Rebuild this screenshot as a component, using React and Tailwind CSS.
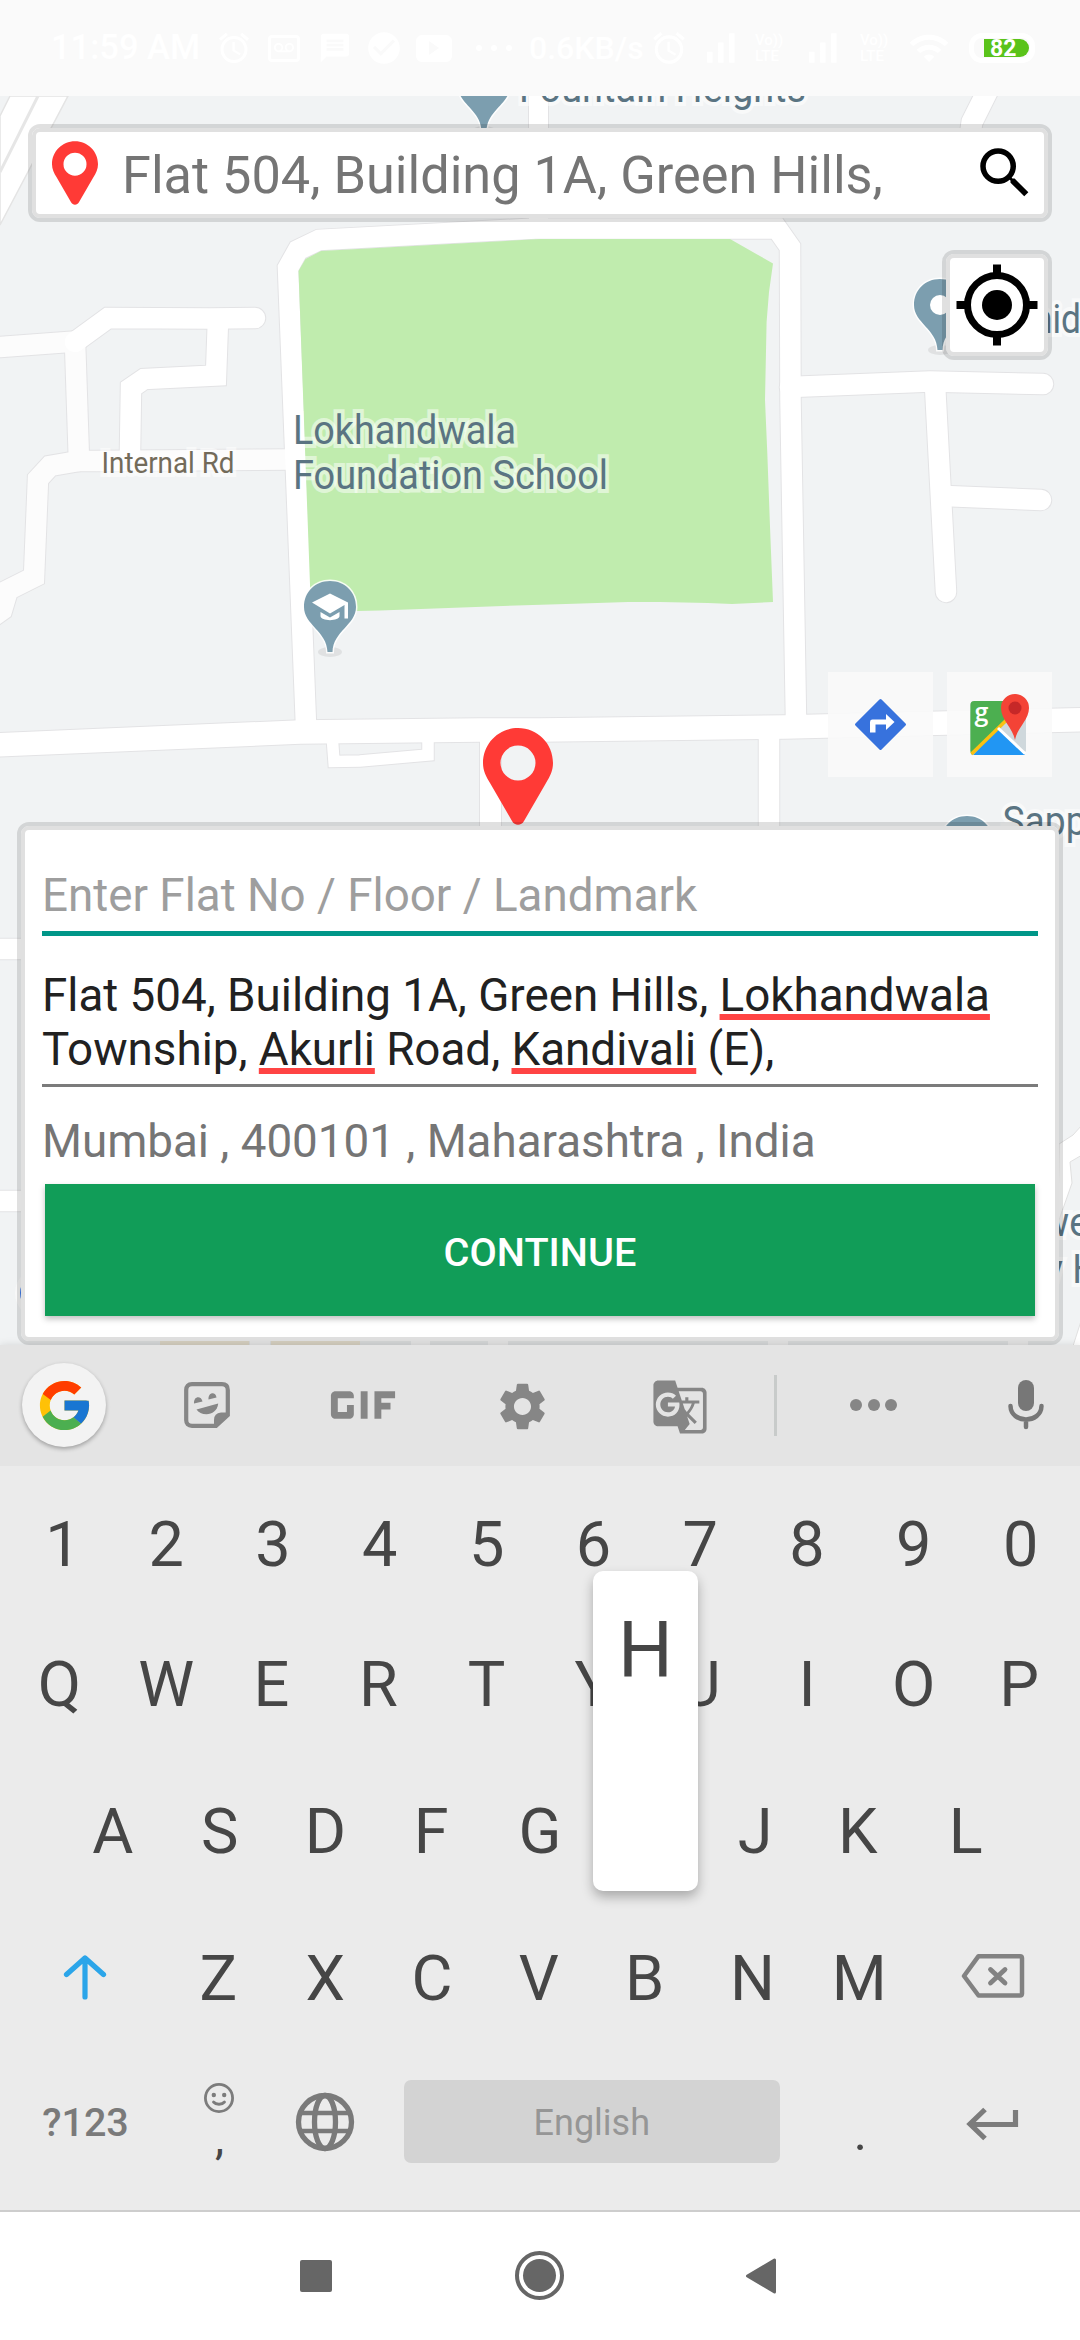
import React from "react";
import { FcGoogle } from "react-icons/fc";
import { MdAccessAlarm, MdCheckCircle, MdGif, MdGTranslate, MdMessage, MdSearch, MdSettings, MdSignalCellularAlt, MdVoicemail, MdWifi } from "react-icons/md";

const ROADS = [
  // [points, width, color]
  ["0,347 75,341.5", 20.5, "#fcfcfc"],
  ["75,342 79,461", 20.5, "#fcfcfc"],
  ["292,459.5 95,461 79,461 50,466 38,479 34,577 8,590 2,610 -12,620", 20.5, "#fcfcfc"],
  ["218,320 216,375.5 144,379 131,388 130,451", 20.5, "#ffffff"],
  ["75,342 108,318 210,318.5 255,318", 20.5, "#ffffff"],
  ["332,735 334,761.5 360,761 428,755 428,735", 11.5, "#ffffff"],
  ["490.5,730 490.5,840", 21, "#ffffff"],
  ["769,730 769,840", 20.5, "#ffffff"],
  ["538.5,80 538.5,228", 19, "#ffffff"],
  ["988,90 972,122 968,150", 21, "#ffffff"],
  ["790,387 930,381.5 1043,384", 20.5, "#ffffff"],
  ["935,385 946,592", 20.5, "#ffffff"],
  ["945,496 1041,500", 20.5, "#ffffff"],
  ["306,725 288,268 298,250 319,240 535,228.5 777,228.5 790,247 790.5,400 796,720", 20.5, "#ffffff"],
  ["-5,745 300,732 480,730 540,730 785,727 1085,719.6", 23.5, "#ffffff"],
  ["-10,949 60,949", 20.5, "#ffffff"],
  ["-10,1201 60,1201", 20.5, "#ffffff"],
];

function PlacePin({ x, y, children }) {
  return (
    <g transform={`translate(${x} ${y})`}>
      <ellipse cx="0" cy="45" rx="12" ry="5" fill="#000" opacity="0.07" />
      <path
        d="M0 -26 C15 -26 26 -15 26 0 C26 18 3 24 2.5 45 H-2.5 C-3 24 -26 18 -26 0 C-26 -15 -15 -26 0 -26Z"
        fill="#7c9eaf"
        stroke="#ffffff"
        strokeOpacity="0.85"
        strokeWidth="3"
        paintOrder="stroke"
      />
      {children || <circle r="10" fill="#fff" />}
    </g>
  );
}

function MapLabel({ x, y, w, size = 40, color = "#5a7482", children }) {
  return (
    <text
      x={x}
      y={y}
      textLength={w}
      lengthAdjust="spacingAndGlyphs"
      fontSize={size}
      fill={color}
      stroke="#ffffff"
      strokeOpacity="0.5"
      strokeWidth="8"
      paintOrder="stroke"
    >
      {children}
    </text>
  );
}

function MapCanvas() {
  return (
    <svg className="absolute inset-0" width="1080" height="1249" viewBox="0 96 1080 1249" fill="none">
      <rect y="96" width="1080" height="1249" fill="#f1f3f4" />
      <path d="M10 96H68L0 225V116Z" fill="#fff" stroke="#e4e4e4" strokeWidth="1.5" />
      <path d="M38 96L0 172" stroke="#e6e6e6" strokeWidth="3" />
      {ROADS.map(([points, width]) => (
        <polyline key={points} points={points} stroke="#e3e3e5" strokeWidth={width + 2} strokeLinecap="round" strokeLinejoin="miter" />
      ))}
      {ROADS.map(([points, width, color]) => (
        <polyline key={points} points={points} stroke={color} strokeWidth={width} strokeLinecap="round" strokeLinejoin="miter" />
      ))}
      <path
        d="M298.5 271L305.5 259L321 251L540 239H730L773 263.5L769 292L766.6 322L765 400L767.3 453L770 526.5L773 602L732 604L708 603L660 602H628L566 604L503 606L380 610.6L311 612Z"
        fill="#c0ecae"
      />
      <path d="M1059 1144L1073 1135L1082 1125V1155L1070 1162L1072 1183L1058 1223Z" fill="#fff" stroke="#e0e0e0" strokeWidth="1" />
      <path d="M1073 1346L1082 1318V1346Z" fill="#fff" stroke="#e0e0e0" strokeWidth="1" />
      <path d="M160 1338H249V1346H160ZM271 1338H360V1346H271Z" fill="#f1ead9" />
      <path d="M250 1338H270V1346H250ZM411 1338H430V1346H411ZM488 1338H508V1346H488ZM768 1338H788V1346H768ZM1008 1338H1028V1346H1008Z" fill="#fff" />
      <circle cx="40" cy="1293" r="25" fill="#f8f8f8" />
      <circle cx="40" cy="1293" r="20" fill="#3b78e7" />

      <PlacePin x={484} y={86} />
      <PlacePin x={940} y={305} />
      <PlacePin x={967} y={842} />
      <PlacePin x={330} y={607}>
        <path d="M0 -13.5L18 -4.5V11.5H14.5V-2L0 6.5L-18 -4.5Z" fill="#fff" />
        <path d="M-9.5 5L0 10.5L9.5 5V9C9.5 14.5 -9.5 14.5 -9.5 9Z" fill="#fff" />
      </PlacePin>
      <MapLabel x={519} y={102} w={287}>Fountain Heights</MapLabel>
      <MapLabel x={293} y={443.7} w={223}>Lokhandwala</MapLabel>
      <MapLabel x={293} y={488.5} w={315}>Foundation School</MapLabel>
      <MapLabel x={101.5} y={472.6} w={133} size={30} color="#736b5a">Internal Rd</MapLabel>
      <MapLabel x={1033} y={332.6} w={48}>nid</MapLabel>
      <MapLabel x={1002.5} y={835} w={84}>Sapp</MapLabel>
      <MapLabel x={1041} y={1236} w={48}>we</MapLabel>
      <MapLabel x={1045} y={1282.5} w={54}>y H</MapLabel>
    </svg>
  );
}

function RedPin({ width, height }) {
  return (
    <svg width={width} height={height} viewBox="0 0 70 97">
      <path
        d="M35 0C54.5 0 70 15.5 70 35C70 42.500 67 48.500 63 55L41 93C38.500 98 31.500 98 29 93L7 55C3 48.500 0 42.500 0 35C0 15.500 15.500 0 35 0ZM35 17.500A17.500 17.500 0 1 0 35 52.500A17.500 17.500 0 1 0 35 17.500Z"
        fill="#ff3a36"
        fillRule="evenodd"
      />
    </svg>
  );
}

function VoLte() {
  return (
    <div className="flex w-8 flex-col text-[15px] leading-[16px] font-medium">
      <span>Vo))</span>
      <span>LTE</span>
    </div>
  );
}

function StatusBar() {
  return (
    <div className="flex h-24 shrink-0 items-center bg-[#fafafa] pl-[51px] text-white">
      <span className="w-[150px] text-[34.500px] font-medium whitespace-nowrap">11:59 AM</span>
      <MdAccessAlarm size={36} className="ml-[15px]" />
      <div className="ml-4 flex h-[27px] w-8 items-center justify-center rounded-[4px] border-[3px] border-white">
        <MdVoicemail size={20} />
      </div>
      <MdMessage size={34} className="ml-[18px]" />
      <MdCheckCircle size={38} className="ml-[13px]" />
      <div className="ml-[13px] flex h-[27px] w-9 items-center justify-center rounded-[6px] bg-white">
        <svg width="12" height="14" viewBox="0 0 12 14"><path d="M1 0L11 7L1 14Z" fill="#fafafa" /></svg>
      </div>
      <div className="ml-6 flex w-9 justify-between">
        <span className="size-1.5 rounded-full bg-white" />
        <span className="size-1.5 rounded-full bg-white" />
        <span className="size-1.5 rounded-full bg-white" />
      </div>
      <span className="ml-[17px] w-[114px] text-[32px] font-medium whitespace-nowrap">0.6KB/s</span>
      <MdAccessAlarm size={38} className="ml-[7px]" />
      <MdSignalCellularAlt size={44} className="ml-2.5" />
      <div className="ml-[13px]"><VoLte /></div>
      <MdSignalCellularAlt size={44} className="ml-[13px]" />
      <div className="ml-4"><VoLte /></div>
      <MdWifi size={42} className="ml-4" />
      <div className="ml-[19px] flex h-[30px] w-[66px] items-center rounded-[13px] border-[5px] border-white pl-2.5">
        <div className="flex h-[18px] w-[45px] items-center rounded-r-[9px] bg-[#5ac31a] pl-1.5 text-[23px] leading-none font-bold">
          82
        </div>
      </div>
    </div>
  );
}

function Framed({ className, children }) {
  return (
    <div className={`rounded-[12px] border-4 border-black/12 ${className}`}>
      <div className="h-full w-full rounded-[8px] border-4 border-[#e0e0e0] bg-white">{children}</div>
    </div>
  );
}

function AddressPanel() {
  return (
    <Framed className="relative mx-[17px] mt-[45px] h-[523px]">
      <div className="flex flex-col px-[17px] pt-[39px] text-[45.750px] leading-[54px] whitespace-nowrap">
        <p className="text-[#9e9e9e]">Enter Flat No / Floor / Landmark</p>
        <div className="mt-2 h-[5px] bg-[#009688]" />
        <p className="mt-[33px] text-[#212121]">
          Flat 504, Building 1A, Green Hills, <Misspelt>Lokhandwala</Misspelt>
          <br />
          Township, <Misspelt>Akurli</Misspelt> Road, <Misspelt>Kandivali</Misspelt> (E),
        </p>
        <div className="mt-[7px] h-[3px] bg-[#7b7b7b]" />
        <p className="mt-7 text-[#757575]">Mumbai , 400101 , Maharashtra , India</p>
        <button className="mx-[3px] mt-[15px] h-[132px] bg-[#119d58] pt-[5px] text-[39.700px] font-medium text-white shadow-[0_3px_6px_rgba(0,0,0,0.25)]">
          CONTINUE
        </button>
      </div>
    </Framed>
  );
}

function Misspelt({ children }) {
  return (
    <span className="underline decoration-[#ff4444] decoration-[6px] underline-offset-[3px] [text-decoration-skip-ink:none]">
      {children}
    </span>
  );
}

function MapSection() {
  return (
    <div className="relative flex h-[1249px] shrink-0 flex-col overflow-hidden">
      <MapCanvas />
      <Framed className="relative mx-7 mt-7 h-[98px]">
        <div className="flex h-full items-center pr-1.5 pl-4">
          <RedPin width={46} height={64} />
          <span className="ml-6 flex-1 pt-[7px] text-[52.250px] leading-none whitespace-nowrap text-[#757575]">
            Flat 504, Building 1A, Green Hills,
          </span>
          <MdSearch size={66} className="text-black" />
        </div>
      </Framed>
      <Framed className="relative mt-7 mr-7 h-[110px] w-[110px] self-end">
        <svg width="94" height="94" viewBox="0 0 94 94">
          <circle cx="47" cy="47" r="29.500" fill="none" stroke="#000" strokeWidth="7" />
          <circle cx="47" cy="47" r="15" />
          <path d="M43 6.500H51V17H43ZM43 77H51V87.500H43ZM6.500 43H17V51H6.500ZM77 43H87.500V51H77Z" />
        </svg>
      </Framed>
      <div className="relative mt-[312px] mr-7 flex gap-3.5 self-end">
        <div className="size-[105px] bg-[#fafafa]/90">
          <svg width="105" height="105" viewBox="0 0 105 105">
            <path d="M52.500 28.500L76.500 52.500L52.500 76.500L28.500 52.500Z" fill="#3772dd" stroke="#3772dd" strokeWidth="3" strokeLinejoin="round" />
            <path d="M42 60.500V50Q42 47.600 44.500 47.600H58V42L66.500 50L58 58V52.500H47.500V60.500Z" fill="#fff" />
          </svg>
        </div>
        <div className="size-[105px] bg-[#fafafa]/90">
          <svg width="105" height="105" viewBox="0 0 105 105">
            <path d="M27 29H75Q79 29 79 33V79L75 83L51 57L26 83L23.400 79V33Q23.400 29 27 29Z" fill="#cfd8dc" />
            <path d="M27.400 29H70V40L25 83Q23.400 81 23.400 79V33Q23.400 29 27.400 29Z" fill="#4caf50" />
            <path d="M26 83L51 56L78 83Z" fill="#2196f3" />
            <path d="M24.500 82L59 48.500" stroke="#fbc112" strokeWidth="3.500" />
            <path d="M51 56L78 81.500" stroke="#fff" strokeWidth="3" />
            <path d="M68 68C66 56 54 48 54 36A14 14 0 0 1 82 36C82 48 70 56 68 68Z" fill="#f44336" />
            <circle cx="68" cy="36" r="6.500" fill="#c62828" />
            <text x="27.500" y="49" fontFamily="Open Sans" fontWeight="600" fontSize="25" fill="#fff">g</text>
          </svg>
        </div>
      </div>
      <div className="absolute top-[632px] left-[483px]">
        <RedPin width={70} height={97} />
      </div>
      <AddressPanel />
    </div>
  );
}

function StickerIcon() {
  return (
    <svg width="46" height="46" viewBox="0 0 46 46" fill="#868686">
      <path d="M8 2.200H38Q43.800 2.200 43.800 8V33L32 43.800H8Q2.200 43.800 2.200 38V8Q2.200 2.200 8 2.200Z" fill="none" stroke="#868686" strokeWidth="4.200" />
      <path d="M44 30.500H37Q30 31 30 38V44H32L44 33Z" />
      <path d="M10 21.500C9.500 13.500 17.500 13.500 18.500 19.500ZM24.500 17.500C24 9.500 32 9.500 32.500 15.500Z" />
      <path d="M12.500 27.500L34.200 21.500C33.500 28.500 28 32.300 22.500 32.300C18 32.300 14.500 30.500 12.500 27.500Z" />
    </svg>
  );
}

function Toolbar() {
  return (
    <div className="flex h-[121px] items-center bg-[#e4e4e4] pb-px text-[#868686]">
      <div className="ml-[22px] flex size-[84px] items-center justify-center rounded-full bg-[#f3f3f3] shadow-[0_2px_4px_rgba(0,0,0,0.3)]">
        <FcGoogle size={59} />
      </div>
      <div className="ml-[78px]"><StickerIcon /></div>
      <MdGif size={110} className="ml-[78px]" />
      <MdSettings size={57} className="mt-[3px] ml-[76px]" />
      <MdGTranslate size={58} className="mt-[3px] ml-[100px]" />
      <div className="ml-[65px] h-[61px] w-[3px] bg-[#c8cbca]" />
      <div className="ml-[73px] flex w-[47px] justify-between">
        <span className="size-3 rounded-full bg-[#868686]" />
        <span className="size-3 rounded-full bg-[#868686]" />
        <span className="size-3 rounded-full bg-[#868686]" />
      </div>
      <svg width="36" height="50" viewBox="0 0 36 50" className="ml-[111px]" fill="none" stroke="#777" strokeWidth="4.500" strokeLinecap="round">
        <rect x="10" y="0" width="16" height="31" rx="8" fill="#777" stroke="none" />
        <path d="M2.500 26C3 44 33 44 33.500 26M18 41V47" />
      </svg>
    </div>
  );
}

// Side-bearing corrections that centre each glyph by its visible ink.
const NUDGE = {
  1: "ml-[7px]",
  E: "mr-[3px]",
  R: "mr-[3px]",
  P: "mr-[3px]",
  D: "mr-[2px]",
  F: "mr-[4px]",
  J: "ml-[3px]",
  K: "mr-[5px]",
  L: "mr-[3px]",
  B: "mr-[2px]",
};

function Key({ children }) {
  return <div className="flex w-[106.800px] items-center justify-center">{children}</div>;
}

function KeyRow({ keys, className }) {
  return (
    <div className={`flex justify-center ${className}`}>
      {keys.split("").map((k) => (
        <Key key={k}>
          <span className={NUDGE[k]}>{k}</span>
        </Key>
      ))}
    </div>
  );
}

function Keyboard() {
  return (
    <div className="relative z-10 flex h-[865px] shrink-0 flex-col bg-[#ebebeb] text-[63px] leading-none text-[#464646] shadow-[0_0_8px_rgba(0,0,0,0.12)]">
      <Toolbar />
      <KeyRow keys="1234567890" className="h-[157px]" />
      <div className="relative">
        <KeyRow keys="QWERTYUIOP" className="h-[123px]" />
        <div className="absolute top-[-52px] left-[593px] flex h-[320px] w-[105px] justify-center rounded-[10px] bg-white pt-[42px] text-[77px] leading-none shadow-[0_6px_12px_rgba(0,0,0,0.28)]">
          H
        </div>
      </div>
      <KeyRow keys="ASDFGHJKL" className="h-[171px]" />
      <div className="flex h-[123px] items-center">
        <div className="flex w-[165px] justify-center pl-1">
          <svg width="44" height="46" viewBox="0 0 44 46" fill="none" stroke="#2ba5e9" strokeWidth="5.200" strokeLinecap="round" strokeLinejoin="round" className="-mt-1">
            <path d="M22 43V4M3.500 20.500L22 4L40.500 20.500" />
          </svg>
        </div>
        <KeyRow keys="ZXCVBNM" className="" />
        <svg width="64" height="46" viewBox="0 0 64 46" fill="none" stroke="#828282" strokeWidth="4.500" strokeLinecap="round" strokeLinejoin="round" className="-mt-1.5 ml-12">
          <path d="M17.500 3.200H59Q61 3.200 61 5.200V40.500Q61 42.500 59 42.500H17.500L3 23Z" />
          <path d="M29.500 16.500L44 30M44 16.500L29.500 30" strokeWidth="4.800" />
        </svg>
      </div>
      <div className="flex h-[163px] items-center">
        <div className="flex w-[165px] justify-center pt-[3px] pl-1.5 text-[39.500px] font-medium text-[#7a7a7a]">?123</div>
        <div className="flex w-[107px] flex-col items-center pb-1">
          <svg width="32" height="32" viewBox="0 0 32 32" fill="none" stroke="#7c7c7c" strokeWidth="2.800" strokeLinecap="round">
            <circle cx="16" cy="16" r="13.600" />
            <path d="M10.500 20C13 23 19 23 21.500 20" />
            <circle cx="10.800" cy="13" r="2.200" fill="#7c7c7c" stroke="none" />
            <circle cx="21.200" cy="13" r="2.200" fill="#7c7c7c" stroke="none" />
          </svg>
          <span className="mt-1 ml-0.5 text-[46px] leading-[40px]">,</span>
        </div>
        <Key>
          <svg width="60" height="60" viewBox="-30 -30 60 60" fill="none" stroke="#7a7a7a" strokeWidth="5.300">
            <circle r="26.500" />
            <ellipse rx="10.500" ry="26.500" />
            <path d="M-25 -9H25M-25 9H25" strokeWidth="4.500" />
          </svg>
        </Key>
        <div className="ml-[25px] flex h-[83px] w-[376px] items-center justify-center rounded-[7px] bg-[#d3d3d3] pt-0.5 text-[36px] text-[#969696]">
          English
        </div>
        <div className="ml-[26px] flex w-[107px] justify-center pt-[22px] pl-0.5 text-[50px]">.</div>
        <svg width="53" height="34" viewBox="0 0 53 34" fill="none" stroke="#7c7c7c" strokeWidth="5.200" className="mt-1 ml-[53px]">
          <path d="M49.500 3V17.500H4M19 2.500L4 17L19 31.500" />
        </svg>
      </div>
    </div>
  );
}

function NavBar() {
  return (
    <div className="relative z-20 flex h-[130px] items-center border-t-2 border-[#cdcdcd] bg-white pb-px">
      <div className="ml-[300px] size-8 rounded-[2px] bg-[#666]" />
      <div className="ml-[183px] flex size-[49px] items-center justify-center rounded-full border-[4px] border-[#666]">
        <div className="size-[33px] rounded-full bg-[#666]" />
      </div>
      <svg width="32" height="38" viewBox="0 0 32 38" className="ml-[181px]" fill="#666" stroke="#666" strokeWidth="3" strokeLinejoin="round">
        <path d="M29.500 3V35L2.500 19Z" />
      </svg>
    </div>
  );
}

export default function App() {
  return (
    <div className="flex h-[2340px] w-[1080px] flex-col overflow-hidden bg-white font-[Roboto,sans-serif]">
      <StatusBar />
      <MapSection />
      <Keyboard />
      <NavBar />
    </div>
  );
}
